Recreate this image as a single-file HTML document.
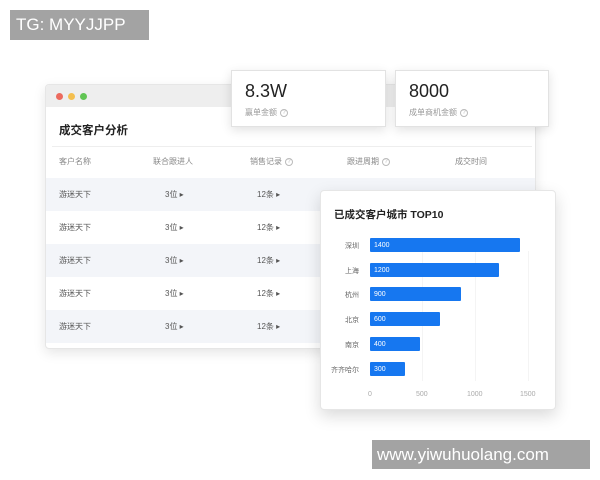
<!DOCTYPE html>
<html><head><meta charset="utf-8"><style>
*{margin:0;padding:0;box-sizing:border-box}
body{width:600px;height:480px;background:#fff;position:relative;overflow:hidden;font-family:"Liberation Sans","Noto Sans CJK SC",sans-serif;color:#333}
.abs{position:absolute}
.tg{left:10px;top:10px;width:139px;height:30px;background:#a3a3a3;color:#fff;font-size:17px;line-height:30px;padding-left:6px}
.web{left:372px;top:440px;width:218px;height:29px;background:#a3a3a3;color:#fff;font-size:17px;line-height:29px;padding-left:5px}
.win{left:45px;top:84px;width:491px;height:265px;background:#fff;border:1px solid #e6e6e6;border-radius:4px;box-shadow:0 4px 12px rgba(0,0,0,.1);overflow:hidden}
.bar{height:22px;background:#eeeeee}
.dot{position:absolute;top:8px;width:7px;height:7px;border-radius:50%}
.t{font-size:11.5px;font-weight:bold;color:#222}
.c{font-size:8px;color:#555}
.h{font-size:8px;color:#888}
.row{position:absolute;left:0;width:491px;height:33px}
.card{background:#fff;border:1px solid #e2e2e2;box-shadow:0 3px 10px rgba(0,0,0,.12)}
.num{font-size:18px;color:#222}
.lab{font-size:8px;color:#999}
.q{display:inline-block;width:8px;height:8px;border:1px solid #bbb;border-radius:50%;font-size:6px;line-height:6px;text-align:center;color:#bbb;vertical-align:middle;margin-left:3px}
.chart{left:320px;top:190px;width:236px;height:220px;border:1px solid #e6e6e6;border-radius:4px;box-shadow:0 6px 16px rgba(0,0,0,.15);background:#fff}
.b{position:absolute;left:49px;height:14px;background:#1677f0;border-radius:1px;color:#fff;font-size:7px;display:flex;align-items:center;padding-left:4px}
.cl{position:absolute;right:196px;font-size:7px;color:#666;text-align:right;white-space:nowrap}
.ax{position:absolute;top:200px;font-size:7px;color:#aaa}
.gl{position:absolute;top:60px;width:1px;height:130px;background:#f4f4f4}
</style></head><body>
<div class="abs tg">TG: MYYJJPP</div>
<div class="abs win">
 <div class="bar"><div class="dot" style="left:10px;background:#ec6a5e"></div><div class="dot" style="left:22px;background:#f4bf4f"></div><div class="dot" style="left:34px;background:#61c554"></div></div>
 <div class="abs t" style="left:13px;top:37px">成交客户分析</div>
 <div class="abs" style="left:6px;top:61px;width:480px;height:1px;background:#eee"></div>
 <div class="abs h" style="left:13px;top:71px">客户名称</div>
 <div class="abs h" style="left:107px;top:71px">联合跟进人</div>
 <div class="abs h" style="left:204px;top:71px">销售记录<span class="q">?</span></div>
 <div class="abs h" style="left:301px;top:71px">跟进周期<span class="q">?</span></div>
 <div class="abs h" style="left:409px;top:71px">成交时间</div>
 <div class="row" style="top:93px;background:#f3f5f9"></div>
 <div class="row" style="top:159px;background:#f3f5f9"></div>
 <div class="row" style="top:225px;background:#f3f5f9"></div>
 <div class="abs c" style="left:13px;top:104px">游迷天下</div><div class="abs c" style="left:119px;top:104px">3位 ▸</div><div class="abs c" style="left:211px;top:104px">12条 ▸</div>
 <div class="abs c" style="left:13px;top:137px">游迷天下</div><div class="abs c" style="left:119px;top:137px">3位 ▸</div><div class="abs c" style="left:211px;top:137px">12条 ▸</div>
 <div class="abs c" style="left:13px;top:170px">游迷天下</div><div class="abs c" style="left:119px;top:170px">3位 ▸</div><div class="abs c" style="left:211px;top:170px">12条 ▸</div>
 <div class="abs c" style="left:13px;top:203px">游迷天下</div><div class="abs c" style="left:119px;top:203px">3位 ▸</div><div class="abs c" style="left:211px;top:203px">12条 ▸</div>
 <div class="abs c" style="left:13px;top:236px">游迷天下</div><div class="abs c" style="left:119px;top:236px">3位 ▸</div><div class="abs c" style="left:211px;top:236px">12条 ▸</div>
</div>
<div class="abs card" style="left:231px;top:70px;width:155px;height:57px">
 <div class="abs num" style="left:13px;top:10px">8.3W</div>
 <div class="abs lab" style="left:13px;top:36px">赢单金额<span class="q">?</span></div>
</div>
<div class="abs card" style="left:395px;top:70px;width:154px;height:57px">
 <div class="abs num" style="left:13px;top:10px">8000</div>
 <div class="abs lab" style="left:13px;top:36px">成单商机金额<span class="q">?</span></div>
</div>
<div class="abs chart">
 <div class="abs t" style="left:13px;top:16px;font-size:10.5px">已成交客户城市 TOP10</div>
 <div class="gl" style="left:101px"></div><div class="gl" style="left:154px"></div><div class="gl" style="left:207px"></div>
 <div class="b" style="top:47px;width:150px">1400</div><div class="cl" style="top:50px">深圳</div>
 <div class="b" style="top:72px;width:129px">1200</div><div class="cl" style="top:75px">上海</div>
 <div class="b" style="top:96px;width:91px">900</div><div class="cl" style="top:99px">杭州</div>
 <div class="b" style="top:121px;width:70px">600</div><div class="cl" style="top:124px">北京</div>
 <div class="b" style="top:146px;width:50px">400</div><div class="cl" style="top:149px">南京</div>
 <div class="b" style="top:171px;width:35px">300</div><div class="cl" style="top:174px">齐齐哈尔</div>
 <div class="ax" style="left:47px">0</div><div class="ax" style="left:95px">500</div><div class="ax" style="left:146px">1000</div><div class="ax" style="left:199px">1500</div>
</div>
<div class="abs web">www.yiwuhuolang.com</div>
</body></html>
